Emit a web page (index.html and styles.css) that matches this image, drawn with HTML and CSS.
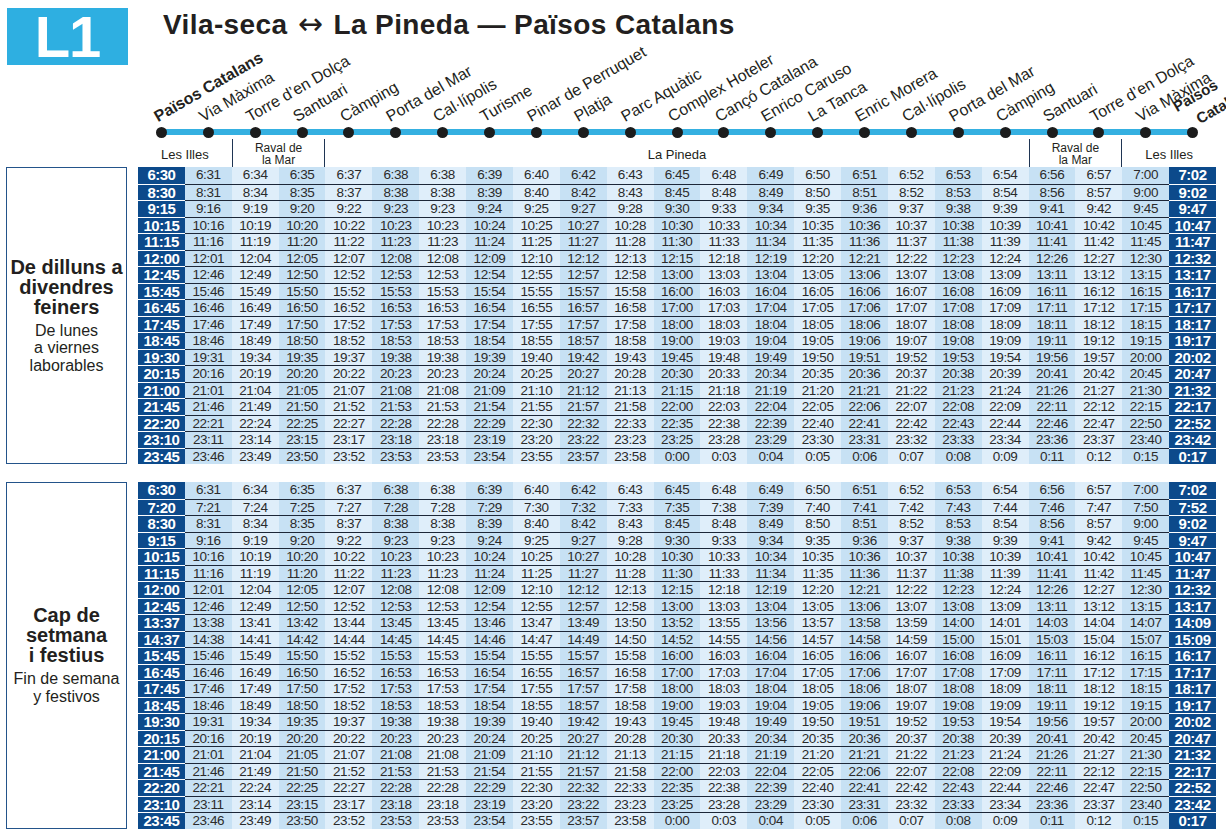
FILE: index.html
```html
<!DOCTYPE html>
<html lang="ca">
<head>
<meta charset="utf-8">
<title>L1 Vila-seca ↔ La Pineda — Països Catalans</title>
<link rel="stylesheet" href="styles.css">
</head>
<body>
<div class="page">
  <header class="top">
    <div class="badge">L1</div>
    <h1 class="title">Vila-seca <span class="arr">↔</span> La Pineda — Països Catalans</h1>
  </header>

  <div class="route">
    <div class="stops">
      <div class="stop"><span class="lbl strong first">Països Catalans</span></div>
      <div class="stop"><span class="lbl">Via Màxima</span></div>
      <div class="stop"><span class="lbl">Torre d’en Dolça</span></div>
      <div class="stop"><span class="lbl">Santuari</span></div>
      <div class="stop"><span class="lbl">Càmping</span></div>
      <div class="stop"><span class="lbl">Porta del Mar</span></div>
      <div class="stop"><span class="lbl">Cal·lípolis</span></div>
      <div class="stop"><span class="lbl">Turisme</span></div>
      <div class="stop"><span class="lbl">Pinar de Perruquet</span></div>
      <div class="stop"><span class="lbl">Platja</span></div>
      <div class="stop"><span class="lbl">Parc Aquàtic</span></div>
      <div class="stop"><span class="lbl">Complex Hoteler</span></div>
      <div class="stop"><span class="lbl">Cançó Catalana</span></div>
      <div class="stop"><span class="lbl">Enrico Caruso</span></div>
      <div class="stop"><span class="lbl">La Tanca</span></div>
      <div class="stop"><span class="lbl">Enric Morera</span></div>
      <div class="stop"><span class="lbl">Cal·lípolis</span></div>
      <div class="stop"><span class="lbl">Porta del Mar</span></div>
      <div class="stop"><span class="lbl">Càmping</span></div>
      <div class="stop"><span class="lbl">Santuari</span></div>
      <div class="stop"><span class="lbl">Torre d’en Dolça</span></div>
      <div class="stop"><span class="lbl">Via Màxima</span></div>
      <div class="stop"><span class="lbl strong l1">Països</span><span class="lbl strong l2">Catalans</span></div>
    </div>
    <div class="zones">
      <div class="zone z2">Les Illes</div>
      <div class="zone z2 raval">Raval de<br>la Mar</div>
      <div class="zone z15">La Pineda</div>
      <div class="zone z2 raval">Raval de<br>la Mar</div>
      <div class="zone z2">Les Illes</div>
    </div>
  </div>

  <section class="block">
    <div class="daybox">
      <div class="ca">De dilluns a<br>divendres<br>feiners</div>
      <div class="es">De lunes<br>a viernes<br>laborables</div>
    </div>
    <div class="tt">
      <div class="row"><span class="d">6:30</span><span>6:31</span><span>6:34</span><span>6:35</span><span>6:37</span><span>6:38</span><span>6:38</span><span>6:39</span><span>6:40</span><span>6:42</span><span>6:43</span><span>6:45</span><span>6:48</span><span>6:49</span><span>6:50</span><span>6:51</span><span>6:52</span><span>6:53</span><span>6:54</span><span>6:56</span><span>6:57</span><span>7:00</span><span class="d">7:02</span></div>
      <div class="row"><span class="d">8:30</span><span>8:31</span><span>8:34</span><span>8:35</span><span>8:37</span><span>8:38</span><span>8:38</span><span>8:39</span><span>8:40</span><span>8:42</span><span>8:43</span><span>8:45</span><span>8:48</span><span>8:49</span><span>8:50</span><span>8:51</span><span>8:52</span><span>8:53</span><span>8:54</span><span>8:56</span><span>8:57</span><span>9:00</span><span class="d">9:02</span></div>
      <div class="row"><span class="d">9:15</span><span>9:16</span><span>9:19</span><span>9:20</span><span>9:22</span><span>9:23</span><span>9:23</span><span>9:24</span><span>9:25</span><span>9:27</span><span>9:28</span><span>9:30</span><span>9:33</span><span>9:34</span><span>9:35</span><span>9:36</span><span>9:37</span><span>9:38</span><span>9:39</span><span>9:41</span><span>9:42</span><span>9:45</span><span class="d">9:47</span></div>
      <div class="row"><span class="d">10:15</span><span>10:16</span><span>10:19</span><span>10:20</span><span>10:22</span><span>10:23</span><span>10:23</span><span>10:24</span><span>10:25</span><span>10:27</span><span>10:28</span><span>10:30</span><span>10:33</span><span>10:34</span><span>10:35</span><span>10:36</span><span>10:37</span><span>10:38</span><span>10:39</span><span>10:41</span><span>10:42</span><span>10:45</span><span class="d">10:47</span></div>
      <div class="row"><span class="d">11:15</span><span>11:16</span><span>11:19</span><span>11:20</span><span>11:22</span><span>11:23</span><span>11:23</span><span>11:24</span><span>11:25</span><span>11:27</span><span>11:28</span><span>11:30</span><span>11:33</span><span>11:34</span><span>11:35</span><span>11:36</span><span>11:37</span><span>11:38</span><span>11:39</span><span>11:41</span><span>11:42</span><span>11:45</span><span class="d">11:47</span></div>
      <div class="row"><span class="d">12:00</span><span>12:01</span><span>12:04</span><span>12:05</span><span>12:07</span><span>12:08</span><span>12:08</span><span>12:09</span><span>12:10</span><span>12:12</span><span>12:13</span><span>12:15</span><span>12:18</span><span>12:19</span><span>12:20</span><span>12:21</span><span>12:22</span><span>12:23</span><span>12:24</span><span>12:26</span><span>12:27</span><span>12:30</span><span class="d">12:32</span></div>
      <div class="row"><span class="d">12:45</span><span>12:46</span><span>12:49</span><span>12:50</span><span>12:52</span><span>12:53</span><span>12:53</span><span>12:54</span><span>12:55</span><span>12:57</span><span>12:58</span><span>13:00</span><span>13:03</span><span>13:04</span><span>13:05</span><span>13:06</span><span>13:07</span><span>13:08</span><span>13:09</span><span>13:11</span><span>13:12</span><span>13:15</span><span class="d">13:17</span></div>
      <div class="row"><span class="d">15:45</span><span>15:46</span><span>15:49</span><span>15:50</span><span>15:52</span><span>15:53</span><span>15:53</span><span>15:54</span><span>15:55</span><span>15:57</span><span>15:58</span><span>16:00</span><span>16:03</span><span>16:04</span><span>16:05</span><span>16:06</span><span>16:07</span><span>16:08</span><span>16:09</span><span>16:11</span><span>16:12</span><span>16:15</span><span class="d">16:17</span></div>
      <div class="row"><span class="d">16:45</span><span>16:46</span><span>16:49</span><span>16:50</span><span>16:52</span><span>16:53</span><span>16:53</span><span>16:54</span><span>16:55</span><span>16:57</span><span>16:58</span><span>17:00</span><span>17:03</span><span>17:04</span><span>17:05</span><span>17:06</span><span>17:07</span><span>17:08</span><span>17:09</span><span>17:11</span><span>17:12</span><span>17:15</span><span class="d">17:17</span></div>
      <div class="row"><span class="d">17:45</span><span>17:46</span><span>17:49</span><span>17:50</span><span>17:52</span><span>17:53</span><span>17:53</span><span>17:54</span><span>17:55</span><span>17:57</span><span>17:58</span><span>18:00</span><span>18:03</span><span>18:04</span><span>18:05</span><span>18:06</span><span>18:07</span><span>18:08</span><span>18:09</span><span>18:11</span><span>18:12</span><span>18:15</span><span class="d">18:17</span></div>
      <div class="row"><span class="d">18:45</span><span>18:46</span><span>18:49</span><span>18:50</span><span>18:52</span><span>18:53</span><span>18:53</span><span>18:54</span><span>18:55</span><span>18:57</span><span>18:58</span><span>19:00</span><span>19:03</span><span>19:04</span><span>19:05</span><span>19:06</span><span>19:07</span><span>19:08</span><span>19:09</span><span>19:11</span><span>19:12</span><span>19:15</span><span class="d">19:17</span></div>
      <div class="row"><span class="d">19:30</span><span>19:31</span><span>19:34</span><span>19:35</span><span>19:37</span><span>19:38</span><span>19:38</span><span>19:39</span><span>19:40</span><span>19:42</span><span>19:43</span><span>19:45</span><span>19:48</span><span>19:49</span><span>19:50</span><span>19:51</span><span>19:52</span><span>19:53</span><span>19:54</span><span>19:56</span><span>19:57</span><span>20:00</span><span class="d">20:02</span></div>
      <div class="row"><span class="d">20:15</span><span>20:16</span><span>20:19</span><span>20:20</span><span>20:22</span><span>20:23</span><span>20:23</span><span>20:24</span><span>20:25</span><span>20:27</span><span>20:28</span><span>20:30</span><span>20:33</span><span>20:34</span><span>20:35</span><span>20:36</span><span>20:37</span><span>20:38</span><span>20:39</span><span>20:41</span><span>20:42</span><span>20:45</span><span class="d">20:47</span></div>
      <div class="row"><span class="d">21:00</span><span>21:01</span><span>21:04</span><span>21:05</span><span>21:07</span><span>21:08</span><span>21:08</span><span>21:09</span><span>21:10</span><span>21:12</span><span>21:13</span><span>21:15</span><span>21:18</span><span>21:19</span><span>21:20</span><span>21:21</span><span>21:22</span><span>21:23</span><span>21:24</span><span>21:26</span><span>21:27</span><span>21:30</span><span class="d">21:32</span></div>
      <div class="row"><span class="d">21:45</span><span>21:46</span><span>21:49</span><span>21:50</span><span>21:52</span><span>21:53</span><span>21:53</span><span>21:54</span><span>21:55</span><span>21:57</span><span>21:58</span><span>22:00</span><span>22:03</span><span>22:04</span><span>22:05</span><span>22:06</span><span>22:07</span><span>22:08</span><span>22:09</span><span>22:11</span><span>22:12</span><span>22:15</span><span class="d">22:17</span></div>
      <div class="row"><span class="d">22:20</span><span>22:21</span><span>22:24</span><span>22:25</span><span>22:27</span><span>22:28</span><span>22:28</span><span>22:29</span><span>22:30</span><span>22:32</span><span>22:33</span><span>22:35</span><span>22:38</span><span>22:39</span><span>22:40</span><span>22:41</span><span>22:42</span><span>22:43</span><span>22:44</span><span>22:46</span><span>22:47</span><span>22:50</span><span class="d">22:52</span></div>
      <div class="row"><span class="d">23:10</span><span>23:11</span><span>23:14</span><span>23:15</span><span>23:17</span><span>23:18</span><span>23:18</span><span>23:19</span><span>23:20</span><span>23:22</span><span>23:23</span><span>23:25</span><span>23:28</span><span>23:29</span><span>23:30</span><span>23:31</span><span>23:32</span><span>23:33</span><span>23:34</span><span>23:36</span><span>23:37</span><span>23:40</span><span class="d">23:42</span></div>
      <div class="row"><span class="d">23:45</span><span>23:46</span><span>23:49</span><span>23:50</span><span>23:52</span><span>23:53</span><span>23:53</span><span>23:54</span><span>23:55</span><span>23:57</span><span>23:58</span><span>0:00</span><span>0:03</span><span>0:04</span><span>0:05</span><span>0:06</span><span>0:07</span><span>0:08</span><span>0:09</span><span>0:11</span><span>0:12</span><span>0:15</span><span class="d">0:17</span></div>
    </div>
  </section>

  <section class="block">
    <div class="daybox">
      <div class="ca">Cap de<br>setmana<br>i festius</div>
      <div class="es">Fin de semana<br>y festivos</div>
    </div>
    <div class="tt">
      <div class="row"><span class="d">6:30</span><span>6:31</span><span>6:34</span><span>6:35</span><span>6:37</span><span>6:38</span><span>6:38</span><span>6:39</span><span>6:40</span><span>6:42</span><span>6:43</span><span>6:45</span><span>6:48</span><span>6:49</span><span>6:50</span><span>6:51</span><span>6:52</span><span>6:53</span><span>6:54</span><span>6:56</span><span>6:57</span><span>7:00</span><span class="d">7:02</span></div>
      <div class="row"><span class="d">7:20</span><span>7:21</span><span>7:24</span><span>7:25</span><span>7:27</span><span>7:28</span><span>7:28</span><span>7:29</span><span>7:30</span><span>7:32</span><span>7:33</span><span>7:35</span><span>7:38</span><span>7:39</span><span>7:40</span><span>7:41</span><span>7:42</span><span>7:43</span><span>7:44</span><span>7:46</span><span>7:47</span><span>7:50</span><span class="d">7:52</span></div>
      <div class="row"><span class="d">8:30</span><span>8:31</span><span>8:34</span><span>8:35</span><span>8:37</span><span>8:38</span><span>8:38</span><span>8:39</span><span>8:40</span><span>8:42</span><span>8:43</span><span>8:45</span><span>8:48</span><span>8:49</span><span>8:50</span><span>8:51</span><span>8:52</span><span>8:53</span><span>8:54</span><span>8:56</span><span>8:57</span><span>9:00</span><span class="d">9:02</span></div>
      <div class="row"><span class="d">9:15</span><span>9:16</span><span>9:19</span><span>9:20</span><span>9:22</span><span>9:23</span><span>9:23</span><span>9:24</span><span>9:25</span><span>9:27</span><span>9:28</span><span>9:30</span><span>9:33</span><span>9:34</span><span>9:35</span><span>9:36</span><span>9:37</span><span>9:38</span><span>9:39</span><span>9:41</span><span>9:42</span><span>9:45</span><span class="d">9:47</span></div>
      <div class="row"><span class="d">10:15</span><span>10:16</span><span>10:19</span><span>10:20</span><span>10:22</span><span>10:23</span><span>10:23</span><span>10:24</span><span>10:25</span><span>10:27</span><span>10:28</span><span>10:30</span><span>10:33</span><span>10:34</span><span>10:35</span><span>10:36</span><span>10:37</span><span>10:38</span><span>10:39</span><span>10:41</span><span>10:42</span><span>10:45</span><span class="d">10:47</span></div>
      <div class="row"><span class="d">11:15</span><span>11:16</span><span>11:19</span><span>11:20</span><span>11:22</span><span>11:23</span><span>11:23</span><span>11:24</span><span>11:25</span><span>11:27</span><span>11:28</span><span>11:30</span><span>11:33</span><span>11:34</span><span>11:35</span><span>11:36</span><span>11:37</span><span>11:38</span><span>11:39</span><span>11:41</span><span>11:42</span><span>11:45</span><span class="d">11:47</span></div>
      <div class="row"><span class="d">12:00</span><span>12:01</span><span>12:04</span><span>12:05</span><span>12:07</span><span>12:08</span><span>12:08</span><span>12:09</span><span>12:10</span><span>12:12</span><span>12:13</span><span>12:15</span><span>12:18</span><span>12:19</span><span>12:20</span><span>12:21</span><span>12:22</span><span>12:23</span><span>12:24</span><span>12:26</span><span>12:27</span><span>12:30</span><span class="d">12:32</span></div>
      <div class="row"><span class="d">12:45</span><span>12:46</span><span>12:49</span><span>12:50</span><span>12:52</span><span>12:53</span><span>12:53</span><span>12:54</span><span>12:55</span><span>12:57</span><span>12:58</span><span>13:00</span><span>13:03</span><span>13:04</span><span>13:05</span><span>13:06</span><span>13:07</span><span>13:08</span><span>13:09</span><span>13:11</span><span>13:12</span><span>13:15</span><span class="d">13:17</span></div>
      <div class="row"><span class="d">13:37</span><span>13:38</span><span>13:41</span><span>13:42</span><span>13:44</span><span>13:45</span><span>13:45</span><span>13:46</span><span>13:47</span><span>13:49</span><span>13:50</span><span>13:52</span><span>13:55</span><span>13:56</span><span>13:57</span><span>13:58</span><span>13:59</span><span>14:00</span><span>14:01</span><span>14:03</span><span>14:04</span><span>14:07</span><span class="d">14:09</span></div>
      <div class="row"><span class="d">14:37</span><span>14:38</span><span>14:41</span><span>14:42</span><span>14:44</span><span>14:45</span><span>14:45</span><span>14:46</span><span>14:47</span><span>14:49</span><span>14:50</span><span>14:52</span><span>14:55</span><span>14:56</span><span>14:57</span><span>14:58</span><span>14:59</span><span>15:00</span><span>15:01</span><span>15:03</span><span>15:04</span><span>15:07</span><span class="d">15:09</span></div>
      <div class="row"><span class="d">15:45</span><span>15:46</span><span>15:49</span><span>15:50</span><span>15:52</span><span>15:53</span><span>15:53</span><span>15:54</span><span>15:55</span><span>15:57</span><span>15:58</span><span>16:00</span><span>16:03</span><span>16:04</span><span>16:05</span><span>16:06</span><span>16:07</span><span>16:08</span><span>16:09</span><span>16:11</span><span>16:12</span><span>16:15</span><span class="d">16:17</span></div>
      <div class="row"><span class="d">16:45</span><span>16:46</span><span>16:49</span><span>16:50</span><span>16:52</span><span>16:53</span><span>16:53</span><span>16:54</span><span>16:55</span><span>16:57</span><span>16:58</span><span>17:00</span><span>17:03</span><span>17:04</span><span>17:05</span><span>17:06</span><span>17:07</span><span>17:08</span><span>17:09</span><span>17:11</span><span>17:12</span><span>17:15</span><span class="d">17:17</span></div>
      <div class="row"><span class="d">17:45</span><span>17:46</span><span>17:49</span><span>17:50</span><span>17:52</span><span>17:53</span><span>17:53</span><span>17:54</span><span>17:55</span><span>17:57</span><span>17:58</span><span>18:00</span><span>18:03</span><span>18:04</span><span>18:05</span><span>18:06</span><span>18:07</span><span>18:08</span><span>18:09</span><span>18:11</span><span>18:12</span><span>18:15</span><span class="d">18:17</span></div>
      <div class="row"><span class="d">18:45</span><span>18:46</span><span>18:49</span><span>18:50</span><span>18:52</span><span>18:53</span><span>18:53</span><span>18:54</span><span>18:55</span><span>18:57</span><span>18:58</span><span>19:00</span><span>19:03</span><span>19:04</span><span>19:05</span><span>19:06</span><span>19:07</span><span>19:08</span><span>19:09</span><span>19:11</span><span>19:12</span><span>19:15</span><span class="d">19:17</span></div>
      <div class="row"><span class="d">19:30</span><span>19:31</span><span>19:34</span><span>19:35</span><span>19:37</span><span>19:38</span><span>19:38</span><span>19:39</span><span>19:40</span><span>19:42</span><span>19:43</span><span>19:45</span><span>19:48</span><span>19:49</span><span>19:50</span><span>19:51</span><span>19:52</span><span>19:53</span><span>19:54</span><span>19:56</span><span>19:57</span><span>20:00</span><span class="d">20:02</span></div>
      <div class="row"><span class="d">20:15</span><span>20:16</span><span>20:19</span><span>20:20</span><span>20:22</span><span>20:23</span><span>20:23</span><span>20:24</span><span>20:25</span><span>20:27</span><span>20:28</span><span>20:30</span><span>20:33</span><span>20:34</span><span>20:35</span><span>20:36</span><span>20:37</span><span>20:38</span><span>20:39</span><span>20:41</span><span>20:42</span><span>20:45</span><span class="d">20:47</span></div>
      <div class="row"><span class="d">21:00</span><span>21:01</span><span>21:04</span><span>21:05</span><span>21:07</span><span>21:08</span><span>21:08</span><span>21:09</span><span>21:10</span><span>21:12</span><span>21:13</span><span>21:15</span><span>21:18</span><span>21:19</span><span>21:20</span><span>21:21</span><span>21:22</span><span>21:23</span><span>21:24</span><span>21:26</span><span>21:27</span><span>21:30</span><span class="d">21:32</span></div>
      <div class="row"><span class="d">21:45</span><span>21:46</span><span>21:49</span><span>21:50</span><span>21:52</span><span>21:53</span><span>21:53</span><span>21:54</span><span>21:55</span><span>21:57</span><span>21:58</span><span>22:00</span><span>22:03</span><span>22:04</span><span>22:05</span><span>22:06</span><span>22:07</span><span>22:08</span><span>22:09</span><span>22:11</span><span>22:12</span><span>22:15</span><span class="d">22:17</span></div>
      <div class="row"><span class="d">22:20</span><span>22:21</span><span>22:24</span><span>22:25</span><span>22:27</span><span>22:28</span><span>22:28</span><span>22:29</span><span>22:30</span><span>22:32</span><span>22:33</span><span>22:35</span><span>22:38</span><span>22:39</span><span>22:40</span><span>22:41</span><span>22:42</span><span>22:43</span><span>22:44</span><span>22:46</span><span>22:47</span><span>22:50</span><span class="d">22:52</span></div>
      <div class="row"><span class="d">23:10</span><span>23:11</span><span>23:14</span><span>23:15</span><span>23:17</span><span>23:18</span><span>23:18</span><span>23:19</span><span>23:20</span><span>23:22</span><span>23:23</span><span>23:25</span><span>23:28</span><span>23:29</span><span>23:30</span><span>23:31</span><span>23:32</span><span>23:33</span><span>23:34</span><span>23:36</span><span>23:37</span><span>23:40</span><span class="d">23:42</span></div>
      <div class="row"><span class="d">23:45</span><span>23:46</span><span>23:49</span><span>23:50</span><span>23:52</span><span>23:53</span><span>23:53</span><span>23:54</span><span>23:55</span><span>23:57</span><span>23:58</span><span>0:00</span><span>0:03</span><span>0:04</span><span>0:05</span><span>0:06</span><span>0:07</span><span>0:08</span><span>0:09</span><span>0:11</span><span>0:12</span><span>0:15</span><span class="d">0:17</span></div>
    </div>
  </section>
</div>
</body>
</html>
```

FILE: styles.css
```css
html, body {
  margin: 0;
  padding: 0;
  overflow: hidden;
  background: #ffffff;
}

body {
  width: 1226px;
  height: 839px;
  font-family: "Liberation Sans", Arial, sans-serif;
  color: #231f20;
}

.page {
  padding-left: 6px;
}

/* ---------- header ---------- */
.top {
  display: flex;
  align-items: flex-start;
  height: 65px;
  padding-top: 8px;
  box-sizing: border-box;
}

.badge {
  width: 121px;
  height: 57px;
  margin-left: 1px;
  background: #2eafe1;
  color: #ffffff;
  font-weight: 700;
  font-size: 58px;
  line-height: 57px;
  text-align: center;
  letter-spacing: -1px;
}

.title {
  margin: 2px 0 0 35px;
  font-size: 28px;
  line-height: 28px;
  font-weight: 700;
  letter-spacing: 0.4px;
  white-space: nowrap;
}

.title .arr {
  font-family: "DejaVu Sans", sans-serif;
  font-weight: 400;
  font-size: 30px;
  margin: 0 2px;
}

/* ---------- route diagram ---------- */
.route {
  margin-left: 132px;
  width: 1078px;
}

.stops {
  display: flex;
  height: 74px;
  position: relative;
}

.stops::before {
  content: "";
  position: absolute;
  left: 23.4px;
  right: 23.4px;
  top: 64px;
  height: 6px;
  background: #35b0e1;
}

.stop {
  flex: 1;
  position: relative;
}

.stop::after {
  content: "";
  position: absolute;
  left: 50%;
  top: 61.5px;
  width: 11px;
  height: 11px;
  margin-left: -5.5px;
  border-radius: 50%;
  background: #1c1c1c;
}

.lbl {
  position: absolute;
  left: 19px;
  bottom: 15px;
  font-size: 16px;
  line-height: 15px;
  white-space: nowrap;
  transform-origin: 0 100%;
  transform: rotate(-30deg);
}

.lbl.strong {
  font-weight: 700;
}

.lbl.first {
  left: 21px;
}

.lbl.l1 {
  left: 9px;
  bottom: 25px;
  font-size: 15px;
}

.lbl.l2 {
  left: 32px;
  bottom: 13px;
  font-size: 15px;
}

.zones {
  display: grid;
  grid-template-columns: repeat(23, 1fr);
  height: 28px;
}

.zone {
  display: flex;
  align-items: center;
  justify-content: center;
  text-align: center;
  font-size: 13px;
  padding-top: 2px;
  box-sizing: border-box;
}

.z2 {
  grid-column: span 2;
}

.z15 {
  grid-column: span 15;
}

.zone.raval {
  border-left: 1px solid #1f3554;
  border-right: 1px solid #1f3554;
  font-size: 12px;
  line-height: 12px;
  padding-top: 2px;
}

/* ---------- timetable blocks ---------- */
.block {
  display: flex;
  gap: 11px;
}

.block + .block {
  margin-top: 18px;
}

.daybox {
  width: 121px;
  box-sizing: border-box;
  border: 1.5px solid #23538a;
  display: flex;
  flex-direction: column;
  justify-content: center;
  text-align: center;
}

.ca {
  font-weight: 700;
  font-size: 20px;
  line-height: 20px;
}

.es {
  font-size: 16px;
  line-height: 17.5px;
  margin-top: 5px;
}

.tt {
  width: 1078px;
}

.row {
  display: grid;
  grid-template-columns: repeat(23, 1fr);
  height: 16.5px;
}

.row span {
  box-sizing: border-box;
  text-align: center;
  font-size: 13.5px;
  line-height: 16.5px;
  letter-spacing: -0.4px;
  color: #2b2b2b;
  background: #dfeefa;
}

.row span:nth-child(even) {
  background: #c7e1f4;
}

.row span.d {
  background: #0c4a8b;
  color: #ffffff;
  font-weight: 700;
  font-size: 15px;
  letter-spacing: -0.5px;
}

.row + .row span {
  border-top: 1px solid #1d2738;
  line-height: 15.5px;
}

.row + .row span.d {
  border-top-color: #ffffff;
}
```
